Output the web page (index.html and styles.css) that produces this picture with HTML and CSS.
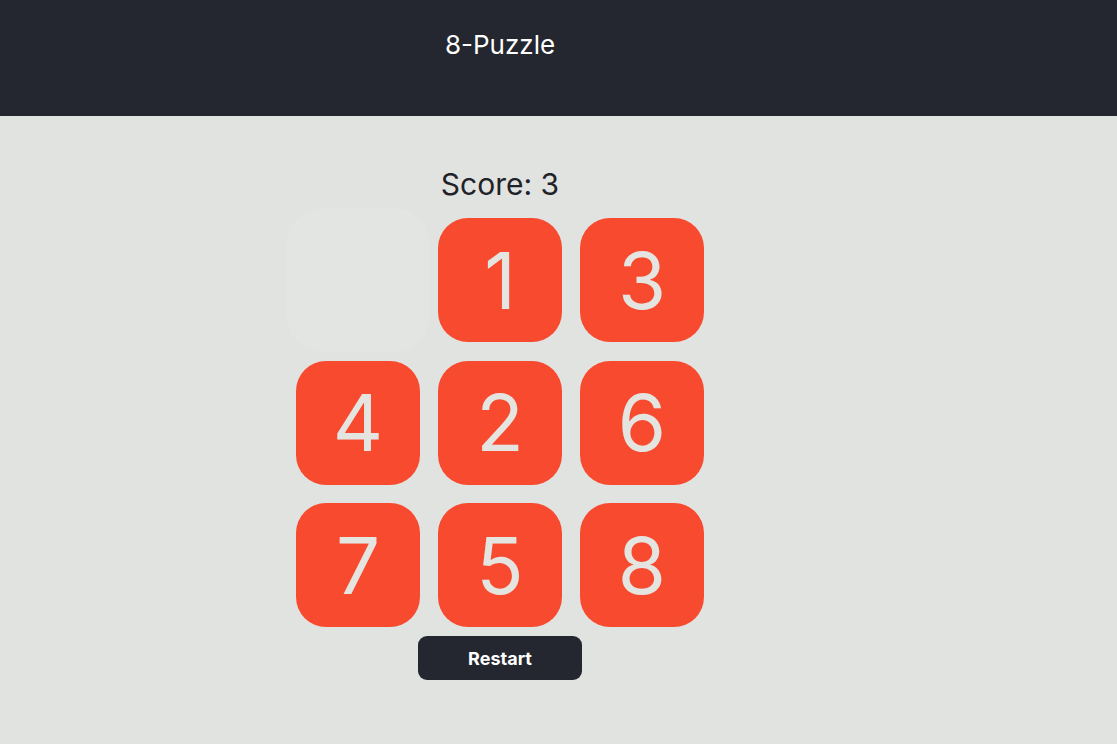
FILE: index.html
```html
<!DOCTYPE html>
<html>
<head>
<meta charset="utf-8">
<title>8-Puzzle</title>
<link rel="stylesheet" href="styles.css">
</head>
<body>
<header class="topbar">
  <h1 class="title">8-Puzzle</h1>
</header>
<main class="game">
  <div class="score">Score: 3</div>
  <div class="board">
    <div class="tile empty"></div>
    <div class="tile">1</div>
    <div class="tile">3</div>
    <div class="tile">4</div>
    <div class="tile">2</div>
    <div class="tile">6</div>
    <div class="tile">7</div>
    <div class="tile">5</div>
    <div class="tile">8</div>
  </div>
  <button class="restart">Restart</button>
</main>
</body>
</html>
```
FILE: styles.css
```css
html, body {
  margin: 0;
  padding: 0;
}
body {
  background: #e1e3e0;
  font-family: Inter, "Noto Sans", sans-serif;
  min-height: 744px;
}
.topbar {
  background: #24272f;
  height: 116px;
  width: 100%;
}
.title {
  width: 1000px;
  margin: 0;
  padding-top: 29px;
  text-align: center;
  color: #ffffff;
  font-weight: 400;
  font-size: 26px;
  line-height: 32px;
}
.game {
  width: 1000px;
  display: flex;
  flex-direction: column;
  align-items: center;
}
.score {
  margin-top: 50px;
  font-size: 30px;
  line-height: 36px;
  color: #1f2227;
}
.board {
  margin-top: 16px;
  display: grid;
  grid-template-columns: repeat(3, 124px);
  grid-auto-rows: 124px;
  column-gap: 18px;
  row-gap: 18.5px;
}
.tile {
  background: #f74a2f;
  border-radius: 30px;
  color: #e4e5e1;
  font-size: 78px;
  display: flex;
  align-items: center;
  justify-content: center;
}
.tile.empty {
  background: #e3e5e2;
  transform: scale(1.15);
}
.restart {
  margin-top: 9px;
  width: 164px;
  height: 44px;
  border: none;
  border-radius: 9px;
  background: #24272f;
  color: #ffffff;
  font-family: Inter, "Noto Sans", sans-serif;
  font-weight: 700;
  font-size: 18px;
}
```
